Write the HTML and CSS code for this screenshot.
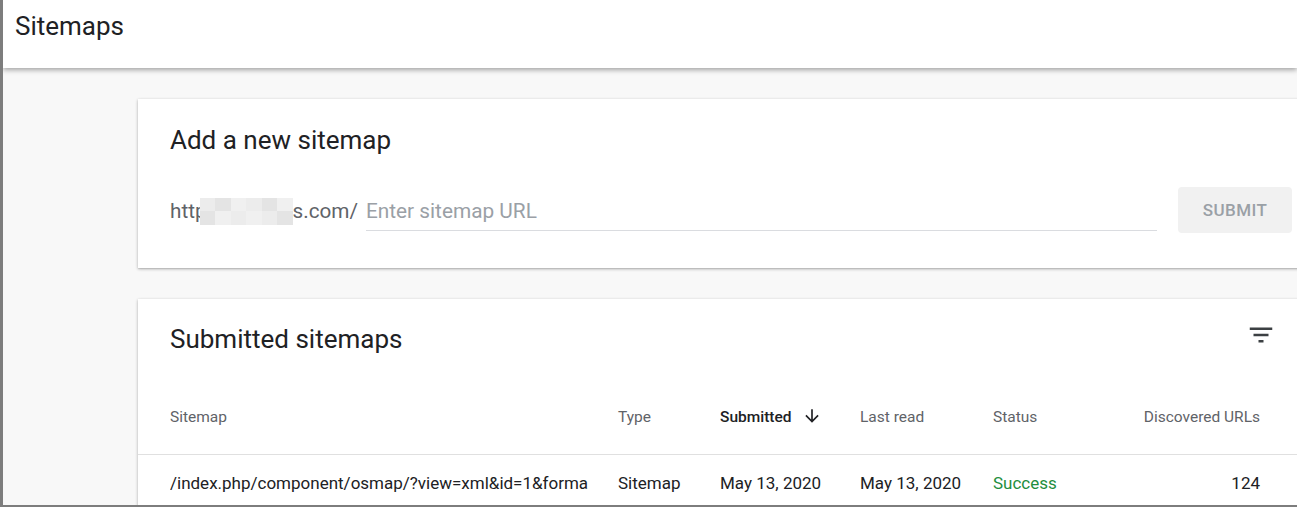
FILE: index.html
```html
<!DOCTYPE html>
<html lang="en">
<head>
<meta charset="utf-8">
<title>Sitemaps</title>
<link rel="stylesheet" href="styles.css">
</head>
<body>
<div class="frame">
  <header class="topbar">
    <h1 class="page-title">Sitemaps</h1>
  </header>
  <main class="content">
    <section class="card add-card">
      <h2 class="card-title">Add a new sitemap</h2>
      <div class="add-row">
        <span class="prefix">http<span class="blur"><i class="c1"></i><i class="c2"></i><i class="c3"></i><i class="c1"></i><i class="c2"></i><i class="c3"></i><i class="c2"></i><i class="c3"></i><i class="c1"></i><i class="c3"></i><i class="c1"></i><i class="c2"></i></span>s.com/</span>
        <div class="field"><span class="placeholder">Enter sitemap URL</span></div>
        <button class="submit">SUBMIT</button>
      </div>
    </section>
    <section class="card list-card">
      <div class="list-head">
        <h2 class="card-title">Submitted sitemaps</h2>
        <svg class="filter-icon" viewBox="0 0 24 24" width="30" height="30"><path d="M10 18h4v-2h-4v2zM3 6v2h18V6H3zm3 7h12v-2H6v2z" fill="#3c4043"/></svg>
      </div>
      <div class="trow thead">
        <div class="cell c-sitemap">Sitemap</div>
        <div class="cell">Type</div>
        <div class="cell sorted">Submitted<svg class="sort-icon" viewBox="0 0 24 24" width="20" height="20"><path d="M20 12l-1.41-1.41L13 16.17V4h-2v12.17l-5.58-5.59L4 12l8 8 8-8z" fill="#202124"/></svg></div>
        <div class="cell">Last read</div>
        <div class="cell">Status</div>
        <div class="cell num">Discovered URLs</div>
      </div>
      <div class="trow tbody">
        <div class="cell c-sitemap">/index.php/component/osmap/?view=xml&amp;id=1&amp;forma</div>
        <div class="cell">Sitemap</div>
        <div class="cell">May 13, 2020</div>
        <div class="cell">May 13, 2020</div>
        <div class="cell success">Success</div>
        <div class="cell num">124</div>
      </div>
    </section>
  </main>
</div>
</body>
</html>
```

FILE: styles.css
```css
html, body {
  margin: 0;
  padding: 0;
}
body {
  font-family: Roboto, "Liberation Sans", Arial, sans-serif;
  color: #202124;
  background: #ffffff;
}
.frame {
  width: 1297px;
  height: 507px;
  box-sizing: border-box;
  border-left: 3px solid #7d7d7d;
  border-bottom: 2px solid #7d7d7d;
  background: #f8f8f8;
  overflow: hidden;
}
.topbar {
  position: relative;
  z-index: 1;
  height: 68px;
  background: #ffffff;
  box-shadow: 0 2px 5px rgba(0, 0, 0, 0.35);
}
.page-title {
  margin: 0;
  padding: 10px 0 0 12px;
  font-size: 26px;
  line-height: 32px;
  font-weight: 400;
  color: #202124;
}
.content {
  padding: 31px 0 0 135px;
}
.card {
  width: 1180px;
  background: #ffffff;
  box-shadow: 0 1px 3px rgba(0, 0, 0, 0.3), 0 1px 1px rgba(0, 0, 0, 0.06);
  box-sizing: border-box;
}
.add-card {
  height: 169px;
  padding: 25px 26px 0 32px;
  margin-bottom: 31px;
}
.card-title {
  margin: 0;
  font-size: 26px;
  line-height: 32px;
  font-weight: 400;
  color: #202124;
}
.add-row {
  display: flex;
  align-items: flex-start;
  margin-top: 31px;
  height: 46px;
}
.prefix {
  display: flex;
  align-items: center;
  height: 48px;
  font-size: 20.7px;
  color: #5f6368;
  white-space: nowrap;
}
.blur {
  display: inline-grid;
  grid-template-columns: repeat(6, 1fr);
  width: 93px;
  height: 27px;
  margin-left: -7px;
}
.blur i { display: block; }
.blur .c1 { background: #ececec; }
.blur .c2 { background: #e4e4e4; }
.blur .c3 { background: #f0f0f0; }
.field {
  flex: 1;
  height: 44px;
  margin: 0 21px 0 8px;
  padding-top: 5px;
  box-sizing: border-box;
  display: flex;
  align-items: center;
  border-bottom: 1px solid #dadce0;
}
.placeholder {
  font-size: 20.8px;
  color: #9aa0a6;
}
.submit {
  width: 114px;
  height: 46px;
  border: none;
  border-radius: 4px;
  background: #f1f1f1;
  color: #9aa0a6;
  font-family: Roboto, "Liberation Sans", Arial, sans-serif;
  font-size: 17px;
  font-weight: 500;
  letter-spacing: 0.4px;
  padding: 0;
}
.list-card {
  height: 260px;
}
.list-head {
  display: flex;
  justify-content: space-between;
  align-items: flex-start;
  padding: 24px 42px 0 32px;
}
.filter-icon {
  margin-top: -3px;
}
.trow {
  display: grid;
  grid-template-columns: 448px 102px 140px 133px 150px 1fr;
  padding: 0 58px 0 32px;
  align-items: center;
}
.thead {
  padding-top: 52px;
  padding-bottom: 27px;
  border-bottom: 1px solid #e0e0e0;
  font-size: 15.5px;
  line-height: 20px;
  color: #5f6368;
}
.tbody {
  padding-top: 16px;
  font-size: 17px;
  line-height: 24px;
  color: #202124;
}
.cell {
  white-space: nowrap;
  min-width: 0;
}
.c-sitemap {
  overflow: hidden;
  margin-right: 30px;
}
.sorted {
  display: flex;
  align-items: center;
  color: #202124;
  font-weight: 500;
}
.sort-icon {
  margin-left: 10px;
  margin-top: -3px;
}
.success {
  color: #1e8e3e;
}
.num {
  text-align: right;
}
```
